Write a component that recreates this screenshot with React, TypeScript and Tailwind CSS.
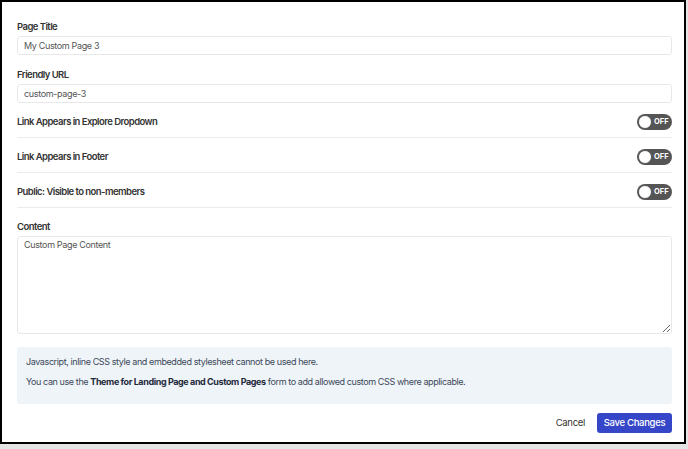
import React from "react";

function Toggle() {
  return (
    <div className="relative flex h-[16px] w-[35px] items-center rounded-full bg-[#555555]">
      <div className="absolute left-[1px] top-[1px] h-[14px] w-[14px] rounded-full border border-[#555] bg-white" />
      <span className="ml-[17px] text-[7.5px] font-bold leading-none text-white">OFF</span>
    </div>
  );
}

function ToggleRow({ label }: { label: string }) {
  return (
    <div className="flex h-[35px] items-start justify-between border-b border-[#ebebeb] pt-[11px]">
      <span className="text-[9.5px] font-semibold leading-[16px] tracking-[-0.55px] text-[#333]">{label}</span>
      <Toggle />
    </div>
  );
}

function Label({ children, className = "" }: { children: React.ReactNode; className?: string }) {
  return (
    <label className={`block pt-[3px] text-[9.5px] font-semibold leading-[13px] tracking-[-0.55px] text-[#333] ${className}`}>
      {children}
    </label>
  );
}

export default function App() {
  return (
    <div className="h-[449px] w-[688px] bg-[#e4e4e4]" style={{ fontFamily: "Inter, 'Noto Sans', sans-serif" }}>
      <div className="flex h-[444px] w-[686px] flex-col border-2 border-black bg-white pl-[15px] pr-[12px] pt-[15px]">
        <Label>Page Title</Label>
        <div className="mt-[3px] flex h-[19px] items-center rounded-[3px] border border-[#e8e8e8] px-[6px] text-[9px] tracking-[-0.35px] text-[#555]">
          My Custom Page 3
        </div>
        <Label className="mt-[10px]">Friendly URL</Label>
        <div className="mt-[3px] flex h-[19px] items-center rounded-[3px] border border-[#e8e8e8] px-[6px] text-[9px] tracking-[-0.35px] text-[#555]">
          custom-page-3
        </div>
        <ToggleRow label="Link Appears in Explore Dropdown" />
        <ToggleRow label="Link Appears in Footer" />
        <ToggleRow label="Public: Visible to non-members" />
        <Label className="mt-[9px]">Content</Label>
        <textarea
          className="mt-[3px] h-[98px] rounded-[3px] border border-[#e8e8e8] px-[6px] py-[2px] text-[9px] leading-[12px] tracking-[-0.35px] text-[#555] outline-none"
          defaultValue="Custom Page Content"
        />
        <div className="mt-[13px] flex h-[57px] flex-col gap-[8px] rounded-[3px] bg-[#eff4f9] px-[9px] pt-[9px] text-[9px] leading-[12px] tracking-[-0.4px] text-[#3c4858]">
          <p>Javascript, inline CSS style and embedded stylesheet cannot be used here.</p>
          <p>
            You can use the <span className="font-bold text-[#1e293b]">Theme for Landing Page and Custom Pages</span> form to add allowed custom CSS where applicable.
          </p>
        </div>
        <div className="mt-[9px] flex items-center justify-end gap-[12px]">
          <span className="text-[9.5px] tracking-[-0.3px] text-[#333]">Cancel</span>
          <button className="h-[20px] w-[75px] rounded-[3px] bg-[#3547c8] text-[9.5px] font-medium tracking-[-0.3px] text-white">
            Save Changes
          </button>
        </div>
      </div>
    </div>
  );
}
